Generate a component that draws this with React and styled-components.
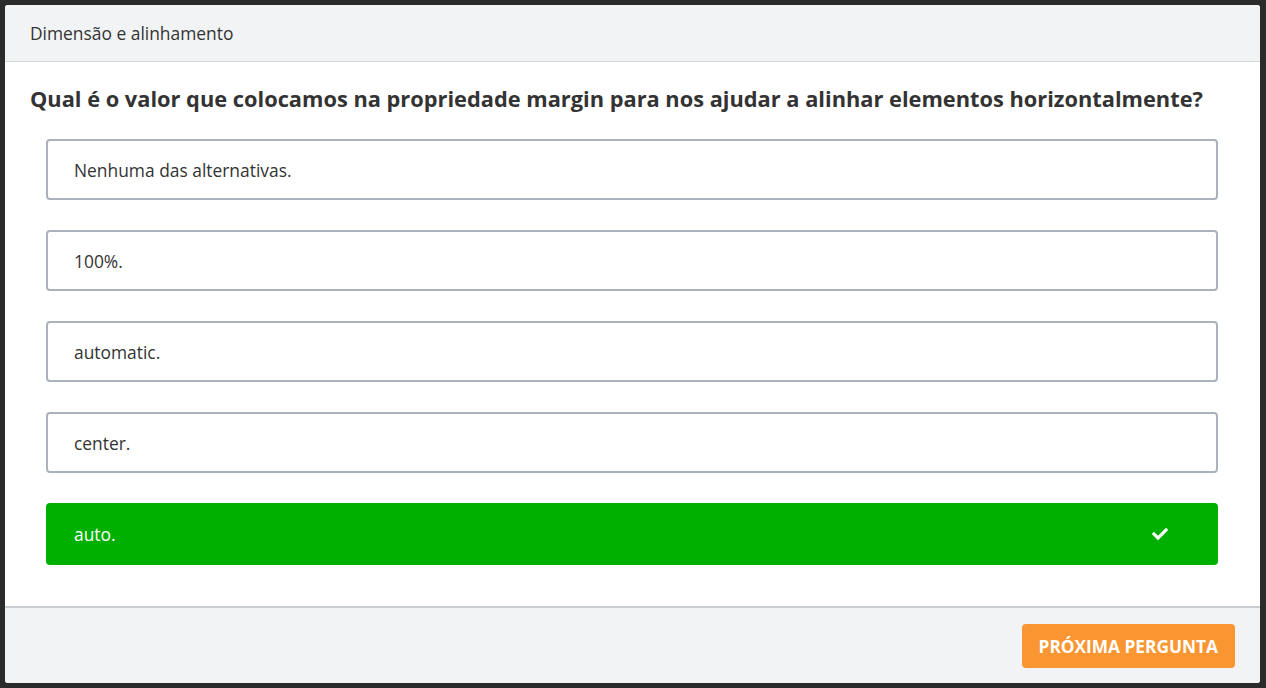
import React from "react";
import styled, { createGlobalStyle } from "styled-components";
import { FaCheck } from "react-icons/fa";

const GlobalStyle = createGlobalStyle`
  html, body {
    margin: 0;
    padding: 0;
    background: #2b2b2b;
    font-family: "Open Sans", "Liberation Sans", sans-serif;
  }
  * { box-sizing: border-box; }
`;

const options = [
  { text: "Nenhuma das alternativas.", correct: false },
  { text: "100%.", correct: false },
  { text: "automatic.", correct: false },
  { text: "center.", correct: false },
  { text: "auto.", correct: true },
];

function App() {
  return (
    <>
      <GlobalStyle />
      <Page>
        <Panel>
          <Header>Dimensão e alinhamento</Header>
          <Body>
            <Question>
              Qual é o valor que colocamos na propriedade margin para nos ajudar a
              alinhar elementos horizontalmente?
            </Question>
            <OptionList>
              {options.map((o, i) => (
                <Option key={i} $correct={o.correct}>
                  <span>{o.text}</span>
                  {o.correct && <FaCheck size={16} />}
                </Option>
              ))}
            </OptionList>
          </Body>
          <Footer>
            <NextButton>PRÓXIMA PERGUNTA</NextButton>
          </Footer>
        </Panel>
      </Page>
    </>
  );
}

const Page = styled.div`
  padding: 5px 6px 5px 5px;
  height: 688px;
`;

const Panel = styled.div`
  height: 678px;
  background: #fff;
  border-radius: 3px;
  display: flex;
  flex-direction: column;
  overflow: hidden;
`;

const Header = styled.div`
  height: 57px;
  background: #f2f3f5;
  border-bottom: 1px solid #d3d6da;
  padding: 0 25px 1px;
  display: flex;
  align-items: center;
  font-size: 17.4px;
  color: #333;
`;

const Body = styled.div`
  flex: 1;
  padding: 22px 25px 0 25px;
`;

const Question = styled.h2`
  margin: 0;
  font-size: 21.8px;
  line-height: 30px;
  font-weight: 700;
  color: #333;
`;

const OptionList = styled.div`
  margin: 25px 17px 0 16px;
  display: flex;
  flex-direction: column;
  gap: 30px;
`;

const Option = styled.div`
  height: ${(p) => (p.$correct ? "62px" : "61px")};
  border: ${(p) => (p.$correct ? "none" : "2px solid #aab2bb")};
  background: ${(p) => (p.$correct ? "#00b000" : "#fff")};
  color: ${(p) => (p.$correct ? "#fff" : "#333")};
  border-radius: 4px;
  display: flex;
  align-items: center;
  justify-content: space-between;
  padding: ${(p) => (p.$correct ? "0 50px 0 28px" : "0 48px 0 26px")};
  font-size: 17.4px;
`;

const Footer = styled.div`
  border-top: 2px solid #c9ccd0;
  background: #f2f3f5;
  height: 77px;
  display: flex;
  justify-content: flex-end;
  align-items: flex-start;
  padding: 16px 25px 0 0;
`;

const NextButton = styled.button`
  height: 44px;
  padding: 0 17px;
  border: none;
  border-radius: 4px;
  background: #fa9631;
  color: #fff;
  font-family: "Open Sans", "Liberation Sans", sans-serif;
  font-weight: 700;
  font-size: 17.3px;
  cursor: pointer;
`;

export default App;
